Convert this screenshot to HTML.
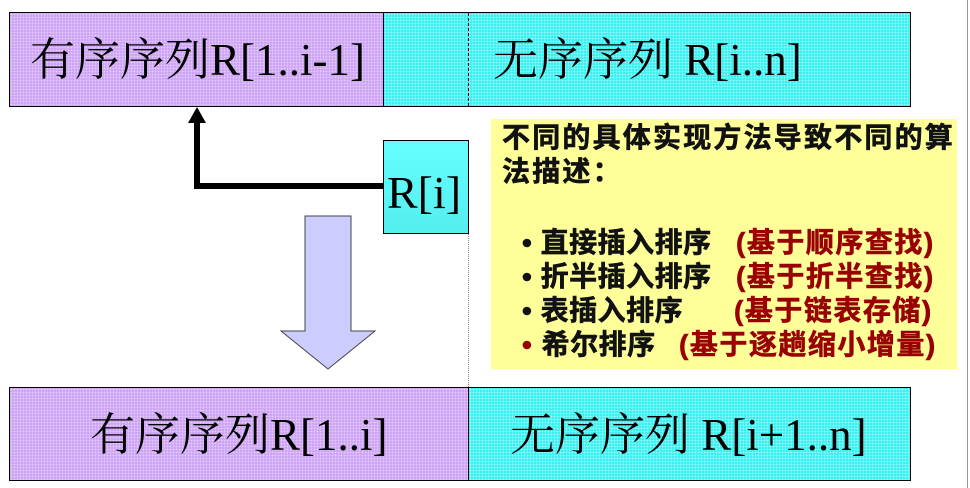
<!DOCTYPE html><html><head><meta charset="utf-8"><style>
body{margin:0;width:970px;height:488px;background:#fff;position:relative;overflow:hidden}
div{position:absolute;box-sizing:border-box}
.s{font-family:"Liberation Serif","Noto Serif CJK SC",serif;color:#000;white-space:nowrap;line-height:1}
.pu{background:#cfa6f5;background-image:radial-gradient(#e6d0fb 35%,transparent 40%);background-size:3px 3px}
.cy{background:#3ff0f0;background-image:radial-gradient(#a8ffff 35%,transparent 40%);background-size:3px 3px}
.y{font-family:"Liberation Sans","Noto Sans CJK SC",sans-serif;font-weight:bold;font-size:28px;white-space:nowrap;line-height:34px;color:#111;-webkit-text-stroke:0.6px currentColor}
.r{color:#990000;letter-spacing:1.5px}
</style></head><body>
<div style="left:967px;top:0;width:1px;height:488px;background:#999"></div>
<div class="pu" style="left:9px;top:12px;width:375px;height:95px;border:1.5px solid #000;border-right:none"></div>
<div class="cy" style="left:383px;top:12px;width:528px;height:95px;border:1.5px solid #000"></div>
<div style="left:468px;top:13px;height:93px;border-left:1px dashed #000"></div>
<div class="s" style="left:30px;top:38px;font-size:45px">有序序列R[1..i-1]</div>
<div class="s" style="left:493px;top:38px;font-size:45px">无序序列 R[i..n]</div>
<div style="left:468px;top:233px;height:154px;border-left:1px dotted #888"></div>
<svg style="position:absolute;left:0;top:0" width="970" height="488">
<polygon points="197,107 188,123 206,123" fill="#000"/>
<polyline points="197,120 197,186 384,186" fill="none" stroke="#000" stroke-width="6"/>
<polygon points="305,216 351,216 351,331 375,331 328,369 281,331 305,331" fill="#ccccff" stroke="#444" stroke-width="1"/>
</svg>
<div style="left:383px;top:140px;width:86px;height:94px;border:1.5px solid #000;background:linear-gradient(#66ffff,#55eeee)"></div>
<div class="s" style="left:387px;top:170px;font-size:46px">R[i]</div>
<div style="left:491px;top:119px;width:466px;height:250px;background:#ffff99"></div>
<div class="y" style="left:502px;top:121px;letter-spacing:2.2px">不同的具体实现方法导致不同的算</div>
<div class="y" style="left:502px;top:155px;letter-spacing:2.2px">法描述：</div>
<div class="y" style="left:522px;top:226px;letter-spacing:0.5px">• 直接插入排序</div>
<div class="y r" style="left:736px;top:226px">(基于顺序查找)</div>
<div class="y" style="left:522px;top:260px;letter-spacing:0.5px">• 折半插入排序</div>
<div class="y r" style="left:736px;top:260px">(基于折半查找)</div>
<div class="y" style="left:522px;top:294px;letter-spacing:0.5px">• 表插入排序</div>
<div class="y r" style="left:734px;top:294px">(基于链表存储)</div>
<div class="y" style="left:522px;top:328px;letter-spacing:0.5px"><span class="r">•</span> 希尔排序</div>
<div class="y r" style="left:679px;top:328px">(基于逐趟缩小增量)</div>
<div class="pu" style="left:9px;top:387px;width:460px;height:94px;border:1.5px solid #000;border-right:none"></div>
<div class="cy" style="left:468px;top:387px;width:443px;height:94px;border:1.5px solid #000"></div>
<div class="s" style="left:90px;top:413px;font-size:45px">有序序列R[1..i]</div>
<div class="s" style="left:510px;top:413px;font-size:45px">无序序列 R[i+1..n]</div>
</body></html>
